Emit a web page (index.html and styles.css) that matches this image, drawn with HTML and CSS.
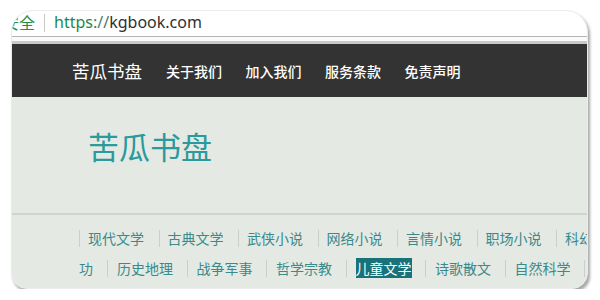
FILE: index.html
```html
<!DOCTYPE html>
<html lang="zh-CN">
<head>
<meta charset="utf-8">
<title>苦瓜书盘</title>
<link rel="stylesheet" href="styles.css">
</head>
<body>
<div class="frame">
  <div class="urlbar">
    <span class="secure">安全</span>
    <span class="urlsep"></span>
    <span class="url"><span class="scheme">https</span><span class="colon">://</span>kgbook.com</span>
  </div>
  <div class="strip"></div>
  <div class="nav">
    <span class="brand">苦瓜书盘</span>
    <a class="navlink">关于我们</a>
    <a class="navlink">加入我们</a>
    <a class="navlink">服务条款</a>
    <a class="navlink">免责声明</a>
  </div>
  <div class="hero">
    <h1 class="title">苦瓜书盘</h1>
  </div>
  <div class="cats">
    <div class="row row1">
      <a class="cat">现代文学</a>
      <a class="cat">古典文学</a>
      <a class="cat">武侠小说</a>
      <a class="cat">网络小说</a>
      <a class="cat">言情小说</a>
      <a class="cat">职场小说</a>
      <a class="cat">科幻小说</a>
    </div>
    <div class="row row2">
      <a class="tail">功</a>
      <a class="cat">历史地理</a>
      <a class="cat">战争军事</a>
      <a class="cat">哲学宗教</a>
      <a class="cat"><span class="sel">儿童文学</span></a>
      <a class="cat">诗歌散文</a>
      <a class="cat">自然科学</a>
      <span class="cat end"></span>
    </div>
  </div>
</div>
</body>
</html>
```

FILE: styles.css
```css
html, body {
  margin: 0;
  padding: 0;
  background: #ffffff;
}

body {
  font-family: "Noto Sans CJK SC", "Noto Sans", sans-serif;
}

.frame {
  margin: 10px 0 0 11px;
  width: 577px;
  height: 279px;
  border: 1px solid #ececec;
  border-radius: 22px 22px 16px 16px;
  overflow: hidden;
  box-shadow: 2px 3px 3px rgba(0, 0, 0, 0.35);
  background: #e4e9e4;
  display: flex;
  flex-direction: column;
  box-sizing: border-box;
}

.urlbar {
  height: 26px;
  flex: none;
  background: #ffffff;
  border-bottom: 1px solid #b4b4b4;
  display: flex;
  align-items: center;
  box-sizing: border-box;
  padding-bottom: 3px;
  white-space: nowrap;
}

.secure {
  margin-left: -9px;
  font-size: 16px;
  color: #1f8f4a;
  line-height: 20px;
}

.urlsep {
  width: 1px;
  height: 18px;
  background: #c8c8c8;
  margin: 2px 9px 0 9px;
}

.url {
  font-family: "Noto Sans", "Liberation Sans", sans-serif;
  font-size: 16px;
  line-height: 20px;
  color: #303030;
}

.scheme {
  color: #1b8a4c;
}

.colon {
  color: #4f7a66;
}

.strip {
  height: 4px;
  flex: none;
  background: #fafafa;
  border-bottom: 3px solid #c9c9c9;
}

.nav {
  height: 53px;
  flex: none;
  background: #333333;
  display: flex;
  align-items: center;
  padding-left: 60px;
  color: #ffffff;
  white-space: nowrap;
}

.brand {
  font-size: 17.5px;
  margin-right: 24px;
  font-weight: 400;
}

.navlink {
  font-size: 14px;
  margin-right: 23.5px;
  color: #ffffff;
  font-weight: 500;
}

.hero {
  height: 116px;
  flex: none;
  border-bottom: 2px solid #d0d3d0;
  box-sizing: content-box;
}

.title {
  margin: 0;
  padding: 30px 0 0 76px;
  font-size: 31px;
  font-weight: 400;
  line-height: 38px;
  color: #2a9a9c;
}

.cats {
  padding: 8px 0 0 0;
}

.row {
  display: flex;
  align-items: center;
  height: 30px;
  white-space: nowrap;
}

.row1 {
  padding-left: 67px;
}

.row2 {
  padding-left: 67px;
}

.cat, .tail {
  font-size: 14px;
  line-height: 17px;
  color: #3a8a8a;
  flex: none;
}

.cat {
  border-left: 1px solid #c9cece;
  padding: 0 14.5px 0 8px;
}

.end {
  height: 17px;
}

.tail {
  padding-right: 14px;
}

.row2 .cat {
  padding-left: 9px;
  padding-right: 13.5px;
}

.sel {
  background: #17727a;
  color: #ffffff;
}
```
